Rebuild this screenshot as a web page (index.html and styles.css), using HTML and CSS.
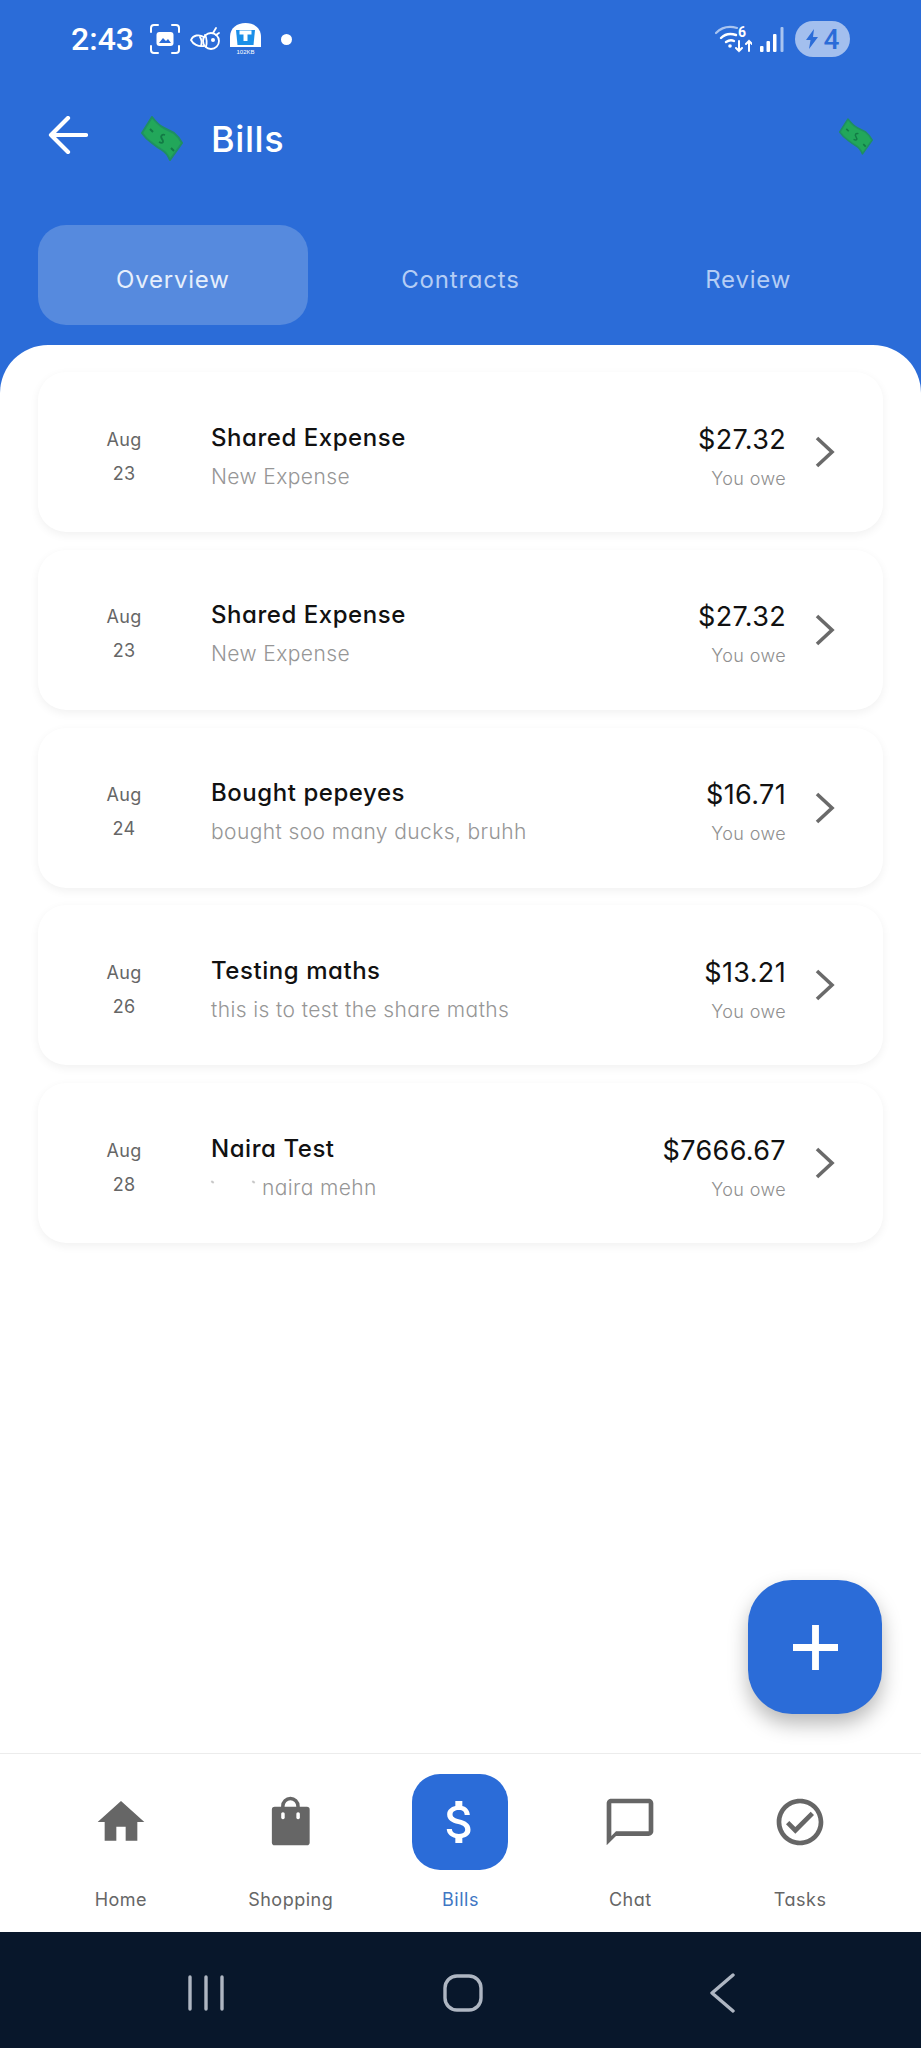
FILE: index.html
```html
<!DOCTYPE html>
<html lang="en">
<head>
<meta charset="utf-8">
<title>Bills</title>
<link rel="stylesheet" href="styles.css">
</head>
<body>
<div class="app">
  <div class="top">
    <div class="status">
      <span class="time">2:43</span>
      <svg class="st-scan" viewBox="0 0 30 30" fill="none" stroke="#fff" stroke-width="2" stroke-linecap="round">
        <path d="M1 8V4a3 3 0 0 1 3-3h4M22 1h4a3 3 0 0 1 3 3v4M29 22v4a3 3 0 0 1-3 3h-4M8 29H4a3 3 0 0 1-3-3v-4"/>
        <rect x="6.500" y="8" width="17" height="14" rx="3" fill="#fff" stroke="none"/>
        <path d="M9 19l4-5 3 3 2-2 3 4z" fill="#2b6cd8" stroke="none"/>
      </svg>
      <svg class="st-bee" viewBox="0 0 30 24" fill="none" stroke="#fff" stroke-width="1.800" stroke-linecap="round">
        <path d="M14 10C9 7 3 8 1 13c2 4 7 7 13 6"/>
        <circle cx="21" cy="14" r="8"/>
        <path d="M10 10c2 3 2 6 1 9M15 8c2 3 2 9 1 12"/>
        <circle cx="23" cy="13" r="2" fill="#fff" stroke="none"/>
        <path d="M23 6l3-5M26 8l3-2"/>
      </svg>
      <svg class="st-usage" viewBox="0 0 33 32">
        <path d="M1 24V14C1 5 8 0 16.500 0S32 5 32 14v10z" fill="#fff"/>
        <path d="M7 7h19l-1.500 15H8.500z" fill="#1a8fe8"/>
        <path d="M10.500 7.500h12v4h-4V18h-4v-6.500h-4z" fill="#fff"/>
        <rect x="1" y="24" width="31" height="8" fill="#2b6cd8"/>
        <text x="16.500" y="31" class="st-usage-text">102KB</text>
      </svg>
      <span class="st-dot"></span>
      <span class="st-spacer"></span>
      <svg class="st-wifi" viewBox="0 0 37 28" fill="none" stroke-linecap="round">
        <path d="M1 8C7 2 15 1 22 3" stroke="#a9c4f0" stroke-width="2.200"/>
        <path d="M6 13c4-4 9-5 15-3" stroke="#fff" stroke-width="2.400"/>
        <path d="M11 17c3-2 6-2 8-1" stroke="#fff" stroke-width="2.400"/>
        <circle cx="15" cy="21" r="1.800" fill="#fff"/>
        <text x="27" y="12" class="st-wifi-text">6</text>
        <path d="M24 16v10M21 23l3 3 3-3M34 26V16M31 19l3-3 3 3" stroke="#fff" stroke-width="2"/>
      </svg>
      <svg class="st-signal" viewBox="0 0 24 25">
        <rect x="0" y="19" width="3.500" height="6" rx="1" fill="#fff"/>
        <rect x="6.500" y="14" width="3.500" height="11" rx="1" fill="#fff"/>
        <rect x="13" y="7" width="3.500" height="18" rx="1" fill="#fff"/>
        <rect x="20.500" y="0" width="3" height="25" rx="1" fill="#a9c4f0"/>
      </svg>
      <span class="st-batt">
        <svg class="st-bolt" viewBox="0 0 12 20"><path d="M8 0L0 11h4.500L3 20l9-12H7z" fill="#2b6cd8"/></svg>
        <span>4</span>
      </span>
    </div>

    <div class="head">
      <svg class="back" viewBox="0 0 40 38" fill="none" stroke="#fff" stroke-width="4.200" stroke-linecap="round" stroke-linejoin="round">
        <path d="M38 19H3M20 2L3 19l17 17"/>
      </svg>
      <svg class="bill" viewBox="0 0 42 45">
        <path d="M11 1Q17 9 23 12T33 17Q38 21 41 27L29 44Q26 37 21 34T11 27Q5 23 1 17Z" fill="#22a75a" stroke="#1f8f62" stroke-width="2" stroke-linejoin="round"/>
        <path d="M9 13l3 3M30 32l3 3" stroke="#127a45" stroke-width="2"/>
        <path d="M24 19c-3-1-5 1-3 4s1 5-3 3" fill="none" stroke="#127a45" stroke-width="1.800"/>
      </svg>
      <h1 class="title">Bills</h1>
      <svg class="bill-sm" viewBox="0 0 42 45">
        <path d="M11 1Q17 9 23 12T33 17Q38 21 41 27L29 44Q26 37 21 34T11 27Q5 23 1 17Z" fill="#22a75a" stroke="#1f8f62" stroke-width="2" stroke-linejoin="round"/>
        <path d="M9 13l3 3M30 32l3 3" stroke="#127a45" stroke-width="2"/>
        <path d="M24 19c-3-1-5 1-3 4s1 5-3 3" fill="none" stroke="#127a45" stroke-width="1.800"/>
      </svg>
    </div>

    <div class="tabs">
      <div class="tab tab-active">Overview</div>
      <div class="tab">Contracts</div>
      <div class="tab">Review</div>
    </div>

    <main class="sheet">
      <article class="card">
        <div class="date"><span>Aug</span><span>23</span></div>
        <div class="info"><div class="name">Shared Expense</div><div class="note">New Expense</div></div>
        <div class="amt"><div class="price">$27.32</div><div class="owe">You owe</div></div>
        <svg class="chev" viewBox="0 0 20 32" fill="none" stroke="#6a6a6a" stroke-width="3.600"><path d="M2 2l15 14L2 30"/></svg>
      </article>
      <article class="card">
        <div class="date"><span>Aug</span><span>23</span></div>
        <div class="info"><div class="name">Shared Expense</div><div class="note">New Expense</div></div>
        <div class="amt"><div class="price">$27.32</div><div class="owe">You owe</div></div>
        <svg class="chev" viewBox="0 0 20 32" fill="none" stroke="#6a6a6a" stroke-width="3.600"><path d="M2 2l15 14L2 30"/></svg>
      </article>
      <article class="card">
        <div class="date"><span>Aug</span><span>24</span></div>
        <div class="info"><div class="name">Bought pepeyes</div><div class="note">bought soo many ducks, bruhh</div></div>
        <div class="amt"><div class="price">$16.71</div><div class="owe">You owe</div></div>
        <svg class="chev" viewBox="0 0 20 32" fill="none" stroke="#6a6a6a" stroke-width="3.600"><path d="M2 2l15 14L2 30"/></svg>
      </article>
      <article class="card">
        <div class="date"><span>Aug</span><span>26</span></div>
        <div class="info"><div class="name">Testing maths</div><div class="note">this is to test the share maths</div></div>
        <div class="amt"><div class="price">$13.21</div><div class="owe">You owe</div></div>
        <svg class="chev" viewBox="0 0 20 32" fill="none" stroke="#6a6a6a" stroke-width="3.600"><path d="M2 2l15 14L2 30"/></svg>
      </article>
      <article class="card">
        <div class="date"><span>Aug</span><span>28</span></div>
        <div class="info"><div class="name">Naira Test</div><div class="note"><span class="redact"></span>naira mehn</div></div>
        <div class="amt"><div class="price">$7666.67</div><div class="owe">You owe</div></div>
        <svg class="chev" viewBox="0 0 20 32" fill="none" stroke="#6a6a6a" stroke-width="3.600"><path d="M2 2l15 14L2 30"/></svg>
      </article>

      <button class="fab" aria-label="Add">
        <svg class="fab-plus" viewBox="0 0 46 46" fill="none" stroke="#fff" stroke-width="7"><path d="M23 0v46M0 23h46"/></svg>
      </button>
    </main>
  </div>

  <nav class="tabbar">
    <div class="nav-item">
      <div class="nav-ic"><svg viewBox="0 0 24 24" fill="#666"><path d="M10 20v-6h4v6h5v-8h3L12 3 2 12h3v8z"/></svg></div>
      <span class="nav-label">Home</span>
    </div>
    <div class="nav-item">
      <div class="nav-ic"><svg viewBox="0 0 24 24"><rect x="3.800" y="5.500" width="16.200" height="16.500" rx="1.200" fill="#666"/><rect x="7.800" y="7.800" width="1.500" height="3" rx=".7" fill="#fff"/><rect x="14.300" y="7.800" width="1.500" height="3" rx=".7" fill="#fff"/><path d="M8.500 7V5.200a3.250 3.250 0 0 1 6.500 0V7" fill="none" stroke="#666" stroke-width="1.500"/></svg></div>
      <span class="nav-label">Shopping</span>
    </div>
    <div class="nav-item">
      <div class="nav-ic nav-ic-active"><svg viewBox="0 0 24 24" fill="#fff"><path d="M11.800 10.900c-2.270-.590-3-1.200-3-2.150 0-1.090 1.010-1.850 2.700-1.850 1.780 0 2.440.850 2.500 2.100h2.210c-.070-1.720-1.120-3.300-3.210-3.810V3h-3v2.160c-1.940.420-3.500 1.680-3.500 3.610 0 2.310 1.910 3.460 4.700 4.130 2.500.600 3 1.480 3 2.410 0 .690-.490 1.790-2.700 1.790-2.060 0-2.870-.920-2.980-2.100h-2.200c.120 2.190 1.760 3.420 3.680 3.830V21h3v-2.150c1.950-.370 3.500-1.500 3.500-3.550 0-2.840-2.430-3.810-4.700-4.400z"/></svg></div>
      <span class="nav-label nav-label-active">Bills</span>
    </div>
    <div class="nav-item">
      <div class="nav-ic"><svg viewBox="0 0 24 24" fill="#666"><path d="M20 2H4c-1.100 0-2 .9-2 2v18l4-4h14c1.100 0 2-.9 2-2V4c0-1.100-.9-2-2-2zm0 14H6l-2 2V4h16v12z"/></svg></div>
      <span class="nav-label">Chat</span>
    </div>
    <div class="nav-item">
      <div class="nav-ic"><svg viewBox="0 0 24 24" fill="#666"><path d="M12 2C6.480 2 2 6.480 2 12s4.480 10 10 10 10-4.480 10-10S17.520 2 12 2zm0 18c-4.410 0-8-3.590-8-8s3.590-8 8-8 8 3.590 8 8-3.590 8-8 8zm4.590-12.420L10 14.170l-2.590-2.580L6 13l4 4 8-8z"/></svg></div>
      <span class="nav-label">Tasks</span>
    </div>
  </nav>

  <div class="sysbar">
    <svg class="sys-recent" viewBox="0 0 36 36" fill="none" stroke="#aeb6c2" stroke-width="3.400" stroke-linecap="round"><path d="M2 2v32M18 2v32M34 2v32"/></svg>
    <svg class="sys-home" viewBox="0 0 40 38" fill="none" stroke="#aeb6c2" stroke-width="3.400"><rect x="2" y="2" width="36" height="34" rx="12"/></svg>
    <svg class="sys-back" viewBox="0 0 26 40" fill="none" stroke="#aeb6c2" stroke-width="3.400" stroke-linecap="round" stroke-linejoin="round"><path d="M24 2L3 20l21 18"/></svg>
  </div>
</div>
</body>
</html>
```

FILE: styles.css
```css
* { box-sizing: border-box; }
html, body { margin: 0; padding: 0; }
body { font-family: Inter, "Liberation Sans", sans-serif; font-feature-settings: "cv11" 1; background: #fff; }
.app { width: 921px; height: 2048px; display: flex; flex-direction: column; overflow: hidden; }
.top { flex: 1; display: flex; flex-direction: column; background: #2b6cd8; min-height: 0; }

.status { height: 78px; display: flex; align-items: center; padding: 0 71px 0 71px; color: #fff; flex: none; }
.time { font-family: Roboto, sans-serif; font-weight: 500; font-size: 32px; width: 79px; }
.st-scan { width: 30px; height: 30px; margin-right: 10px; }
.st-bee { width: 30px; height: 24px; margin-right: 9px; }
.st-usage { width: 33px; height: 32px; margin-right: 19px; }
.st-usage-text { font-family: "Liberation Sans", sans-serif; font-size: 6px; fill: #fff; text-anchor: middle; }
.st-dot { width: 11px; height: 11px; border-radius: 50%; background: #fff; }
.st-spacer { flex: 1; }
.st-wifi { width: 37px; height: 28px; margin-right: 8px; }
.st-wifi-text { font-family: Roboto, sans-serif; font-weight: 700; font-size: 14px; fill: #fff; text-anchor: middle; }
.st-signal { width: 24px; height: 25px; margin-right: 11px; }
.st-batt { width: 55px; height: 36px; border-radius: 18px; background: #a3bfee; color: #2b6cd8; display: flex; align-items: center; justify-content: center; gap: 6px; font-family: Roboto, sans-serif; font-weight: 500; font-size: 28px; }
.st-bolt { width: 12px; height: 20px; }

.head { height: 114px; display: flex; align-items: center; padding: 0 48px; flex: none; }
.back { width: 40px; height: 38px; margin-right: 53px; }
.bill { width: 42px; height: 45px; margin-right: 28px; margin-top: 7px; }
.bill-sm { width: 34px; height: 37px; margin-left: auto; margin-top: 3px; }
.title { margin: 7px 0 0; font-size: 36px; font-weight: 500; color: #fff; letter-spacing: .6px; }

.tabs { display: grid; grid-template-columns: repeat(3, 1fr); padding: 0 29px; margin-top: 33px; flex: none; }
.tab { height: 100px; padding-top: 8px; margin: 0 9px; border-radius: 28px; display: flex; align-items: center; justify-content: center; font-size: 24px; font-weight: 400; color: #b4cdf5; letter-spacing: .8px; }
.tab-active { background: #568ade; color: #e6effc; }

.sheet { position: relative; flex: 1; margin-top: 20px; padding: 27px 38px 0; background: #fff; border-radius: 48px 48px 0 0; display: flex; flex-direction: column; gap: 17.750px; }
.card { height: 160px; flex: none; border-radius: 28px; background: #fff; box-shadow: 0 3px 10px rgba(0, 0, 0, .06); display: flex; align-items: center; padding: 0 48px; }
.date { width: 76px; margin-right: 49px; margin-top: 8px; display: flex; flex-direction: column; align-items: center; gap: 11px; color: #666; font-size: 18px; line-height: 23px; letter-spacing: .3px; }
.info { flex: 1; min-width: 0; margin-top: 9px; }
.name { font-size: 24px; font-weight: 500; color: #111; line-height: 30px; letter-spacing: .55px; }
.note { margin-top: 10px; font-size: 21px; font-weight: 300; color: #969696; line-height: 28px; letter-spacing: .4px; display: flex; align-items: center; }
.redact { width: 51px; height: 28px; flex: none; display: flex; justify-content: space-between; align-items: flex-start; padding: 7px 7px 0 0; }
.redact::before, .redact::after { content: ""; width: 3px; height: 2px; background: #c8c8c8; transform: rotate(35deg); }
.amt { text-align: right; margin-top: 9px; }
.price { font-size: 27px; font-weight: 400; color: #111; line-height: 32px; letter-spacing: .35px; }
.owe { margin-top: 12px; font-size: 18px; font-weight: 300; color: #8f8f8f; line-height: 22px; letter-spacing: .4px; }
.chev { width: 20px; height: 32px; margin-left: 29px; flex: none; }

.fab { position: absolute; right: 39px; top: 1235px; width: 134px; height: 134px; padding: 0; border: 0; border-radius: 44px; background: #2b6cd8; box-shadow: 0 10px 20px rgba(0, 0, 0, .28); display: flex; align-items: center; justify-content: center; }
.fab-plus { width: 45px; height: 45px; }

.tabbar { height: 179px; flex: none; border-top: 1px solid #ececec; display: grid; grid-template-columns: repeat(5, 1fr); padding: 20px 36px 0; background: #fff; }
.nav-item { display: flex; flex-direction: column; align-items: center; }
.nav-ic { width: 96px; height: 96px; display: flex; align-items: center; justify-content: center; border-radius: 28px; }
.nav-ic svg { width: 56px; height: 56px; }
.nav-ic-active { background: #2b6cd8; }
.nav-label { margin-top: 18px; font-size: 18px; line-height: 23px; color: #666; letter-spacing: .5px; }
.nav-label-active { color: #3f77c4; }

.sysbar { height: 116px; flex: none; background: #08172b; display: flex; align-items: center; padding: 6px 0 0; }
.sys-recent { width: 36px; height: 36px; margin-left: 188px; }
.sys-home { width: 40px; height: 38px; margin-left: 219px; }
.sys-back { width: 26px; height: 40px; margin-left: 226px; }
```
